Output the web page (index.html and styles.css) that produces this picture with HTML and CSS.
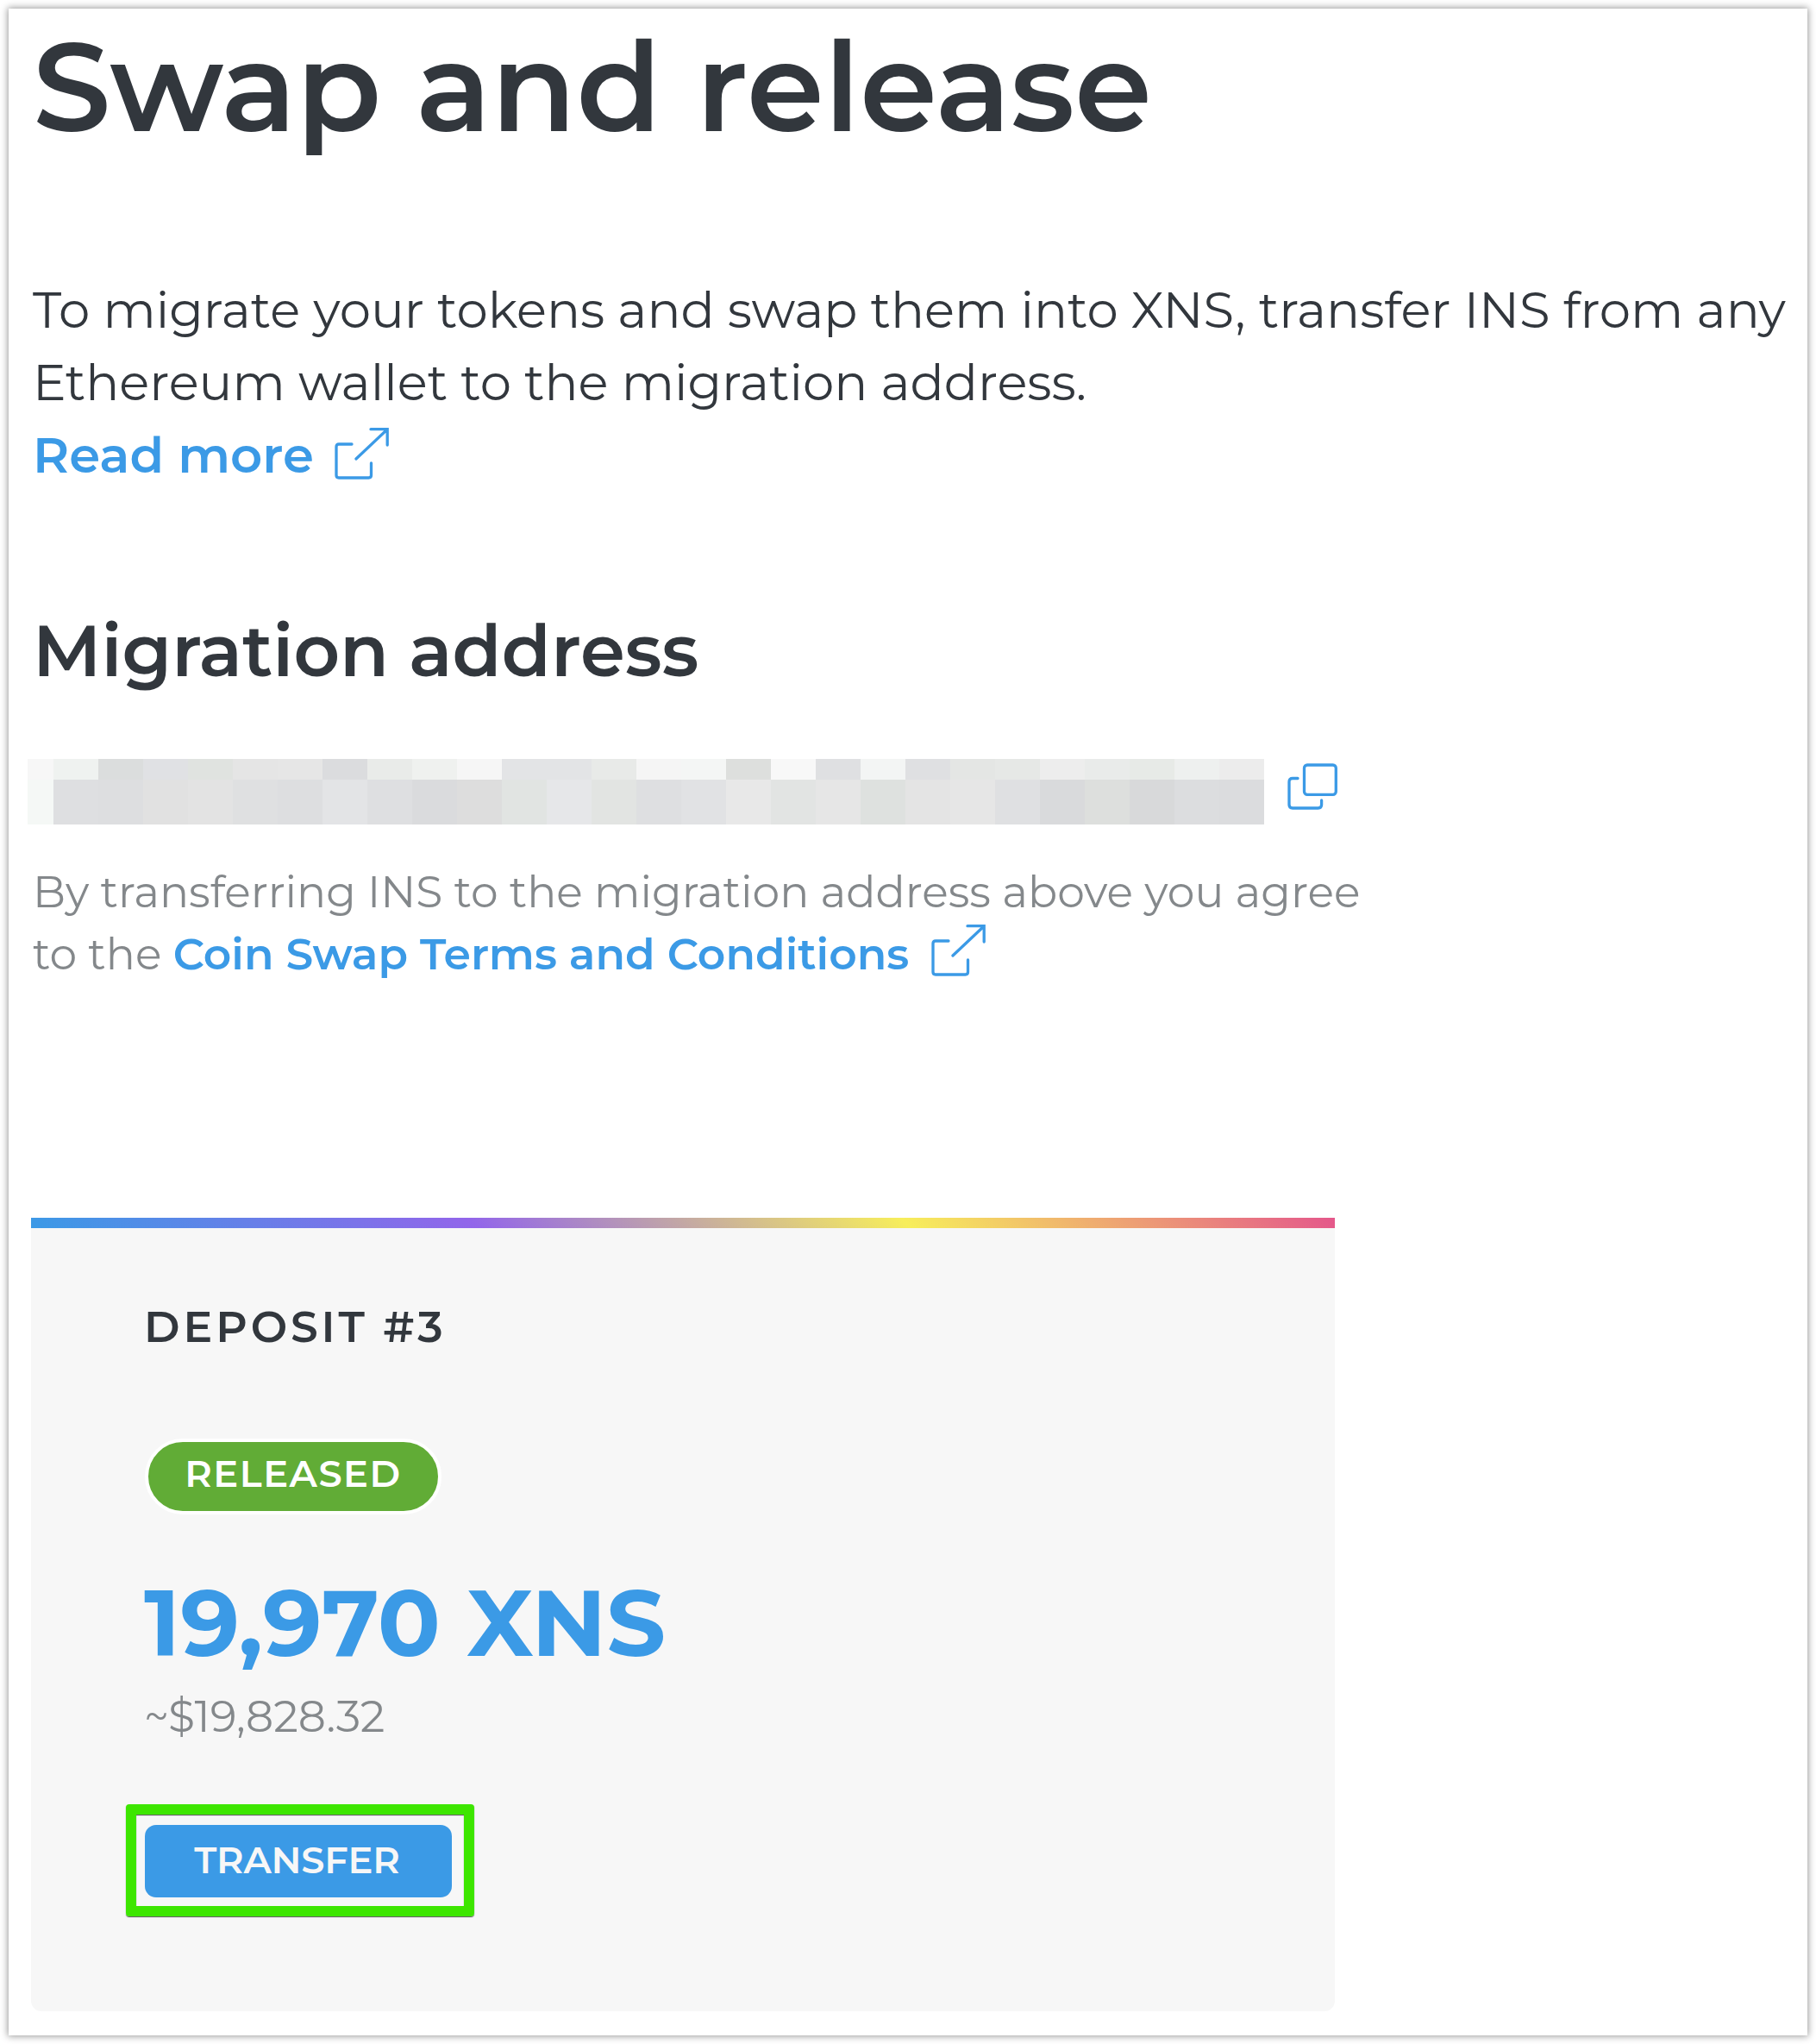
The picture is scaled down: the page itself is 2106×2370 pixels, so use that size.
FILE: index.html
```html
<!DOCTYPE html>
<html lang="en">
<head>
<meta charset="utf-8">
<title>Swap and release</title>
<link rel="stylesheet" href="styles.css">
</head>
<body>
<main class="panel">
  <h1 class="title">Swap and release</h1>
  <p class="intro">To migrate your tokens and swap them into XNS, transfer INS from any<br>Ethereum wallet to the migration address.<br><a class="link">Read more<svg class="ext" viewBox="0 0 63 60"><path d="M20 19H5q-3 0-3 3v33q0 3 3 3h34.500q3 0 3-3V41M25 36 61 2M42 1.700h19.200V20"/></svg></a></p>
  <h2 class="subtitle">Migration address</h2>
  <div class="address">
    <div class="mask" id="mask"></div>
    <svg class="copy" viewBox="0 0 58 54"><rect x="19.500" y="2" width="36.800" height="34.300" rx="3.500"/><path d="M12 17.500H6q-4 0-4 4V48q0 4 4 4h29.600q4 0 4-4v-5"/></svg>
  </div>
  <p class="terms">By transferring INS to the migration address above you agree<br>to the <a class="link">Coin Swap Terms and Conditions<svg class="ext" viewBox="0 0 63 60"><path d="M20 19H5q-3 0-3 3v33q0 3 3 3h34.500q3 0 3-3V41M25 36 61 2M42 1.700h19.200V20"/></svg></a></p>
  <section class="card">
    <h3 class="deposit">DEPOSIT #3</h3>
    <div class="badge">RELEASED</div>
    <div class="amount">19,970 XNS</div>
    <div class="usd">~$19,828.32</div>
    <div class="focus"><button class="button">TRANSFER</button></div>
  </section>
</main>
<script src="mask.js"></script>
</body>
</html>
```
FILE: mask.js
```js
// Tints of the blocks that hide the address, top row then bottom row.
const tints = (
  'f7f7f7 eff2f0 dbdddd e0e1e4 e0e3e0 e5e5e5 e6e6e6 dbdcde e9ebe9 eff1ef f6f6f6 e3e4e6 e3e4e6 e8eae8 ' +
  'f5f5f5 f4f6f5 dddfdd f8f8f8 dfe0e2 f3f5f4 dfe0e2 e4e6e4 e6e8e6 ededed e9ebea e7eae7 eef0ef ececec ' +
  'f5f8f6 dedfe1 dddee0 e1e1e1 e3e3e3 dfe0e1 dddee0 e3e4e6 dedfe1 dadbdd dddddd e1e4e2 e6e7e9 e2e4e2 ' +
  'dedfe1 e1e2e4 e8e8e8 e2e4e3 e6e6e6 dee1df e4e4e4 e6e6e6 dfe0e2 d9dadc dddfdd d8d9da dcdddf dbdcde'
).split(' ');
const mask = document.getElementById('mask');
for (const tint of tints) {
  const block = document.createElement('i');
  block.style.background = '#' + tint;
  mask.append(block);
}
```
FILE: styles.css
```css
* { box-sizing: border-box; margin: 0; padding: 0; }
body { background: #fff; font-family: Montserrat, Inter, sans-serif; color: #32373d; }
.panel { margin: 10px; width: 2086px; height: 2350px; padding: 7px 0 0 26px; box-shadow: 0 0 8px 1px #999; white-space: nowrap; }
.title, .intro, .subtitle, .terms { margin-left: 2px; }
.title { font-size: 144px; line-height: 168px; font-weight: 600; }
.intro { height: 252px; margin-top: 133px; font-size: 57.8px; line-height: 84px; }
.link { color: #3b9ae6; font-weight: 600; }
.ext { width: 63px; height: 60px; fill: none; stroke: #3b9ae6; stroke-width: 3.3; stroke-linecap: round; margin: -16px 0 0 24px; vertical-align: -8px; }
.subtitle { margin-top: 134px; font-size: 83.2px; line-height: 100px; font-weight: 600; }
.address { display: flex; margin: 76px 0 0 -4px; height: 76px; }
.mask { display: grid; grid-template: 24px 52px / 30px repeat(27, 52px); }
.copy { width: 58px; height: 54px; fill: none; stroke: #3b9ae6; stroke-width: 3.3; stroke-linecap: round; margin: 5px 0 0 27px; }
.terms { height: 144px; margin-top: 42px; font-size: 50.44px; line-height: 72px; color: #84888b; }
.terms .ext { margin-left: 26px; }
.card { position: relative; margin-top: 270px; width: 1512px; height: 920px; background: #f7f7f7; padding: 96px 0 0 132px; border-radius: 0 0 12px 12px; }
.card::before { content: ""; position: absolute; inset: 0 0 auto; height: 12px; background: linear-gradient(45deg, #3b9ae6, #9265ea 34%, #f7ee5b 67%, #e4578b); }
.deposit { margin-left: -1px; font-size: 50.4px; line-height: 60px; font-weight: 600; letter-spacing: 3.9px; }
.badge { margin-top: 100px; width: 344px; height: 88px; border: 4px solid #fff; border-radius: 44px; background: #61ac36; color: #fff; font-size: 43.2px; line-height: 73px; font-weight: 600; letter-spacing: 1.5px; text-align: center; }
.amount { margin: 66px 0 0 -1px; font-size: 107.8px; line-height: 120px; font-weight: 700; color: #3b9ae6; }
.usd { margin: 18px 0 0 -1px; font-size: 50.4px; line-height: 60px; color: #84888b; }
.focus { margin: 72px 0 0 -22px; width: 404px; height: 130px; border: 12px solid #3de600; border-radius: 4px; padding: 12px 10px; box-shadow: 0 1px 1px #555, inset 0 1px 1px #555; }
.button { display: block; width: 356px; height: 84px; padding: 0 3px 3px 0; font: 600 43.2px Montserrat, Inter, sans-serif; letter-spacing: -.2px; color: #f7f7f7; background: #3b9ae6; border: 0; border-radius: 13px; }
```
